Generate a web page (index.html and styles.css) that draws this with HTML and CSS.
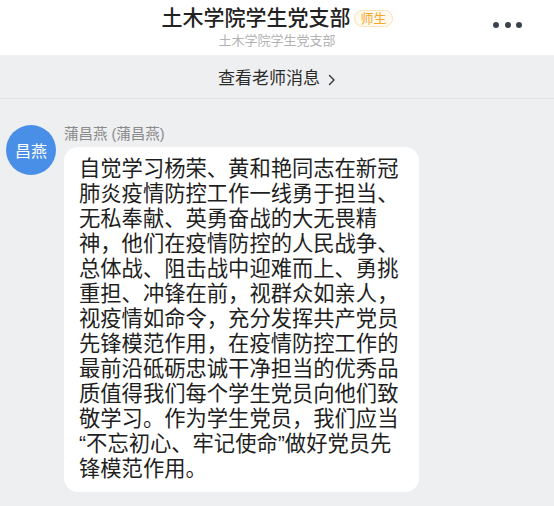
FILE: index.html
```html
<!DOCTYPE html>
<html lang="zh-CN">
<head>
    <meta charset="UTF-8">
    <meta name="viewport" content="width=device-width, initial-scale=1.0">
    <title>土木学院学生党支部</title>
    <link rel="stylesheet" href="styles.css">
</head>
<body>
    <div class="header">
        <div></div>
        <div class="header-center">
            <div class="title-row">
                <span class="title">土木学院学生党支部</span>
                <span class="badge">师生</span>
            </div>
            <p class="subtitle">土木学院学生党支部</p>
        </div>
        <div class="more">
            <span class="dot"></span>
            <span class="dot"></span>
            <span class="dot"></span>
        </div>
    </div>
    <div class="teacher-bar">
        查看老师消息
        <svg class="chevron" width="8" height="12" viewBox="0 0 8 12">
            <path d="M1.5 1.5 L6 6 L1.5 10.5" fill="none" stroke="#333" stroke-width="1.4" stroke-linecap="round" stroke-linejoin="round"/>
        </svg>
    </div>
    <div class="chat">
        <div class="message">
            <div class="avatar">昌燕</div>
            <div class="message-body">
                <p class="sender">蒲昌燕 (蒲昌燕)</p>
                <div class="bubble">自觉学习杨荣、黄和艳同志在新冠肺炎疫情防控工作一线勇于担当、无私奉献、英勇奋战的大无畏精神，他们在疫情防控的人民战争、总体战、阻击战中迎难而上、勇挑重担、冲锋在前，视群众如亲人，视疫情如命令，充分发挥共产党员先锋模范作用，在疫情防控工作的最前沿砥砺忠诚干净担当的优秀品质值得我们每个学生党员向他们致敬学习。作为学生党员，我们应当“不忘初心、牢记使命”做好党员先锋模范作用。</div>
            </div>
        </div>
    </div>
</body>
</html>
```

FILE: styles.css
```css
body {
    font-family: "Liberation Sans", "Noto Sans CJK SC", sans-serif;
    background-color: #eeeff1;
    color: #1f1f1f;
    margin: 0;
    padding: 0;
}
p {
    margin: 0;
}
.header {
    display: grid;
    grid-template-columns: 1fr auto 1fr;
    background: #fff;
    height: 55px;
    box-sizing: border-box;
    padding-top: 6px;
}
.header-center {
    display: flex;
    flex-direction: column;
    align-items: center;
}
.title-row {
    display: flex;
    align-items: center;
    gap: 4px;
}
.title {
    font-size: 21px;
    line-height: 24px;
    font-weight: 500;
    color: #222;
}
.badge {
    font-size: 13px;
    line-height: 15px;
    color: #f5a623;
    background: #fffaf1;
    border: 1px solid #fbe2b6;
    border-radius: 9px;
    padding: 0 5px;
}
.subtitle {
    font-size: 13px;
    line-height: 16px;
    margin-top: 3px;
    color: #b3b3b3;
}
.more {
    display: flex;
    justify-content: flex-end;
    gap: 5.5px;
    padding-right: 32px;
    padding-top: 16px;
}
.dot {
    width: 6px;
    height: 6px;
    border-radius: 50%;
    background: #3a4250;
}
.teacher-bar {
    display: flex;
    justify-content: center;
    align-items: center;
    gap: 8px;
    font-size: 17px;
    line-height: 24px;
    color: #2b2b2b;
    padding: 12px 0 7px;
    border-bottom: 1px solid #e1e2e5;
}
.chevron {
    margin-top: 1px;
}
.chat {
    padding: 26px 0 0 6px;
}
.message {
    display: flex;
    gap: 8px;
}
.avatar {
    width: 50px;
    height: 50px;
    border-radius: 50%;
    background: #4a8fe7;
    color: #fff;
    font-size: 16px;
    display: flex;
    align-items: center;
    justify-content: center;
    flex-shrink: 0;
}
.sender {
    font-size: 14.5px;
    line-height: 18px;
    color: #8a8a8a;
}
.bubble {
    margin-top: 4px;
    width: 321px;
    background: #fff;
    border-radius: 14px;
    padding: 10px 19px 10px 15px;
    font-size: 21.3px;
    line-height: 25px;
}
```
